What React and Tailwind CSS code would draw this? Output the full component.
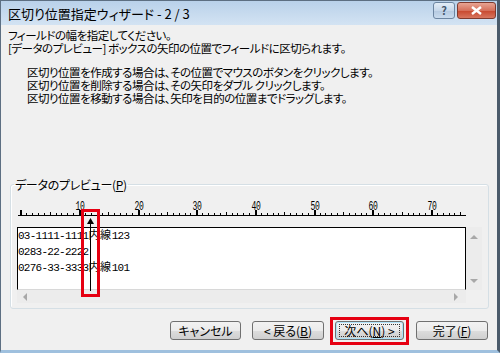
import React from 'react';

const jp = "font-['Noto_Sans_CJK_JP','Noto_Sans',sans-serif] [font-feature-settings:'palt']";

const Ruler = () => {
  const ticks = [];
  for (let i = 0; i <= 75; i++) {
    const x = Math.round(2.3 + i * 5.867);
    const major = i % 10 === 0;
    const h = major ? 5 : i % 5 === 0 ? 3 : 2;
    ticks.push(
      <rect key={i} x={x} y={16 - h} width={major ? 2 : 1} height={h} fill="#000" />
    );
  }
  const labels = [10, 20, 30, 40, 50, 60, 70];
  return (
    <svg width="450" height="18" className="block">
      <rect x="0" y="16" width="448" height="1" fill="#000" />
      {ticks}
      {labels.map((n) => (
        <text
          key={n}
          x={Math.round(2.3 + n * 5.867) + 1}
          y="11"
          fontSize="12"
          textAnchor="middle"
          textLength="9"
          lengthAdjust="spacingAndGlyphs"
          fontFamily="Liberation Mono, monospace"
          fill="#000"
        >
          {n}
        </text>
      ))}
    </svg>
  );
};

const Btn = ({ children, className = '' }) => (
  <div
    className={`h-[19px] flex items-center justify-center rounded-[3px] border border-[#707070] bg-[linear-gradient(#f2f2f2_0%,#ebebeb_50%,#dddddd_51%,#cfcfcf_100%)] text-[12px] leading-none text-black ${className}`}
  >
    {children}
  </div>
);

const Arrow = ({ dir }) => {
  const pts = {
    up: '0,4 4,0 8,4',
    down: '0,0 4,4 8,0',
    left: '4,0 0,4 4,8',
    right: '0,0 4,4 0,8',
  }[dir];
  const vert = dir === 'up' || dir === 'down';
  return (
    <svg width={vert ? 8 : 5} height={vert ? 5 : 8} className="block">
      <polygon points={pts} fill="#a8a8a8" />
    </svg>
  );
};

export default function App() {
  return (
    <div className={`relative w-[500px] h-[353px] flex flex-col overflow-hidden border-l border-r-[3px] border-b-[3px] border-l-[#5d6f82] border-r-[#4b5b6b] border-b-[#9fc0de] bg-[#f0f0f0] ${jp}`}>
      {/* title bar */}
      <div className="h-[25px] shrink-0 flex items-start justify-between border-t border-[#5d6f82] bg-[linear-gradient(#b9d1ea,#c9dcef_60%,#d3e3f3)] pl-[7px] pr-[1px]">
        <div className="pt-[5px] text-[13px] leading-[15px] text-black">区切り位置指定ウィザード - 2 / 3</div>
        <div className="flex gap-[2px] pt-[1px]">
          <div className="w-[22px] h-[17px] flex items-center justify-center rounded-[3px] border border-[#6d86a2] bg-[linear-gradient(#e3edf7,#c6d7ea_50%,#b4c9e0_51%,#c9dbee)] text-[11px] font-bold leading-none text-[#44566b]">
            ?
          </div>
          <div className="w-[39px] h-[17px] flex items-center justify-center rounded-[3px] border border-[#7f3a2e] bg-[linear-gradient(#e8a493,#d6705b_50%,#c7472d_51%,#d8765f)]">
            <svg width="11" height="9" className="block">
              <path d="M1 1 L10 8 M10 1 L1 8" stroke="#fff" strokeWidth="2.4" />
            </svg>
          </div>
        </div>
      </div>

      {/* body */}
      <div className="flex-1 flex flex-col px-[7px] pt-[4px] text-[11.5px] tracking-[-0.5px] text-black">
        <div className="leading-[13px]">
          <p>フィールドの幅を指定してください。</p>
          <p>[データのプレビュー] ボックスの矢印の位置でフィールドに区切られます。</p>
        </div>
        <div className="mt-[11px] ml-[19px] leading-[13px]">
          <p>区切り位置を作成する場合は、その位置でマウスのボタンをクリックします。</p>
          <p>区切り位置を削除する場合は、その矢印をダブル クリックします。</p>
          <p>区切り位置を移動する場合は、矢印を目的の位置までドラッグします。</p>
        </div>

        <fieldset className="mt-[73px] ml-[2px] w-[479px] h-[131px] rounded-[3px] border border-[#d5dfe5] shadow-[inset_1px_1px_0_#fff] p-0">
          <legend className="ml-[3px] px-[1px] text-[12px] leading-[13px] tracking-[-0.3px]">
            データのプレビュー(<span className="underline">P</span>)
          </legend>
          <div className="pl-[7px] pt-[8px]">
            <Ruler />
          </div>
          <div className="mt-[10px] ml-[6px] grid grid-cols-[449px_16px] grid-rows-[63px_13px]">
            <div className="bg-white border-t border-l border-r border-black border-b border-b-[#d8d8d8] font-['Liberation_Mono','Noto_Sans_CJK_JP',monospace] text-[11px] leading-[16px] tracking-[-0.73px] [font-feature-settings:normal]">
              <p>03-1111-1111<span className="tracking-[0.6px]">内線</span>123</p>
              <p>0283-22-2222</p>
              <p>0276-33-3333<span className="tracking-[0.6px]">内線</span>101</p>
            </div>
            <div className="bg-[#ececec] flex flex-col items-center justify-between pt-[8px] pb-[6px]">
              <Arrow dir="up" />
              <Arrow dir="down" />
            </div>
            <div className="bg-[#ececec] flex items-center justify-between pl-[6px] pr-[7px]">
              <Arrow dir="left" />
              <Arrow dir="right" />
            </div>
            <div className="bg-[#f0f0f0]" />
          </div>
        </fieldset>

        <div className="mt-[8px] flex items-start justify-end pr-[2px] tracking-normal">
          <Btn className="w-[71px] mt-[4px] text-[11px]">キャンセル</Btn>
          <Btn className="w-[72px] mt-[4px] ml-[11px]">
            &lt; 戻る(<span className="underline">B</span>)
          </Btn>
          <div className="ml-[6px] border-[3px] border-[#e60012] pt-[1px] px-[2px] pb-[2px]">
            <Btn className="w-[69px] border-[#3c7fb1] shadow-[inset_0_0_0_1px_#aee2f8]">
              <span className="border border-dotted border-[#333] px-[4px] leading-[11px]">
                次へ(<span className="underline">N</span>) &gt;
              </span>
            </Btn>
          </div>
          <Btn className="w-[72px] mt-[4px] ml-[7px]">
            完了(<span className="underline">F</span>)
          </Btn>
        </div>
      </div>

      {/* column break arrow and highlight */}
      <div className="absolute left-[86px] top-[218px] flex flex-col items-center">
        <svg width="7" height="73" className="block">
          <polygon points="3.5,0 0,6 7,6" fill="#000" />
          <rect x="3" y="5" width="1" height="68" fill="#000" />
        </svg>
      </div>
      <div className="absolute left-[80px] top-[209px] w-[19px] h-[88px] border-[3px] border-[#e60012]" />
    </div>
  );
}
